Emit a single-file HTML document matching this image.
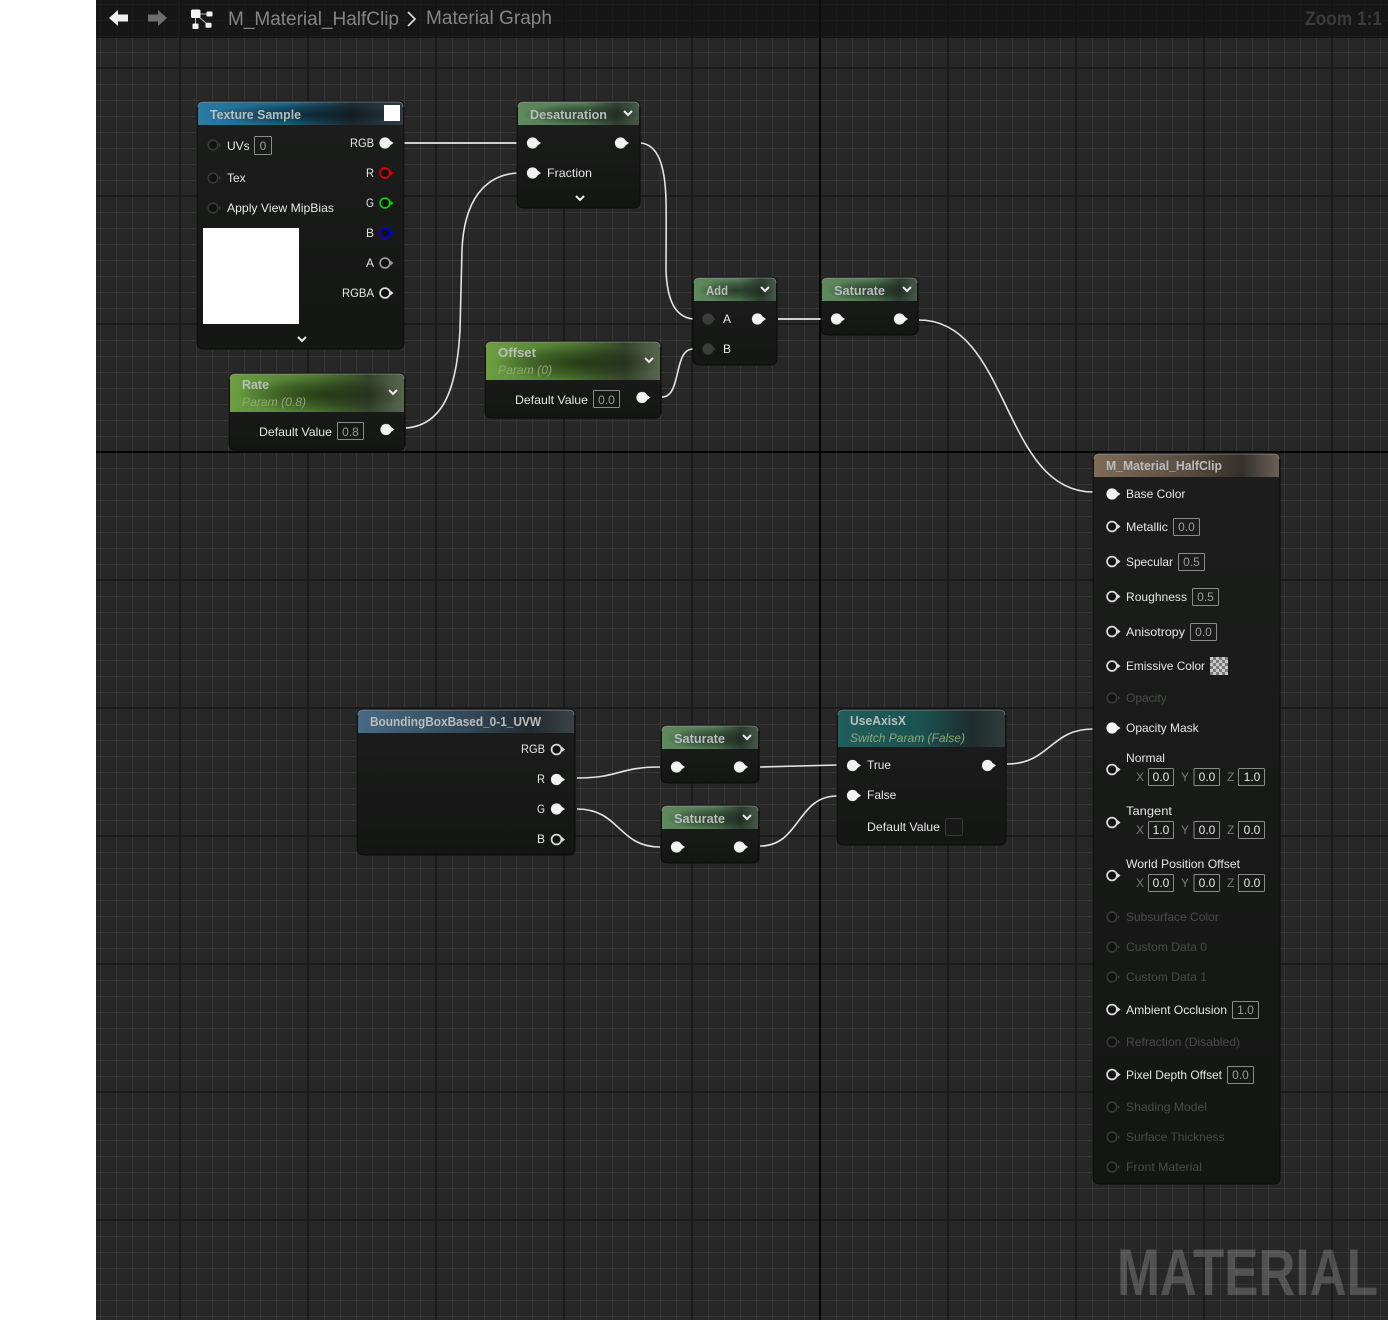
<!DOCTYPE html>
<html><head><meta charset="utf-8"><title>M_Material_HalfClip - Material Graph</title>
<style>
html,body{margin:0;padding:0;background:#fff}
body{width:1388px;height:1320px;overflow:hidden}
svg{display:block}
text{font-family:"Liberation Sans",sans-serif;font-size:12px;fill:#e6e6e6}
.t{font-weight:bold;font-size:12.5px;fill:#b9bdbd}
.s{font-style:italic;fill:#8fa678}
.d{fill:#4a4c4a}
.v{fill:#9c9c9c;text-anchor:middle}
.x{fill:#7a7a7a}
.b{fill:none;stroke:#8a8a8a;stroke-width:1}
.w{fill:none;stroke:#e4e4e4;stroke-width:1.6}
.n{fill:url(#body);stroke:#0a0a0a;stroke-width:1}
.h{font-size:19px;fill:#858585}
.r{fill:none;stroke:#a8a8a8;stroke-opacity:.55;stroke-width:1}
.k{fill:url(#dk)}
</style></head><body>
<svg width="1388" height="1320" viewBox="0 0 1388 1320" xmlns="http://www.w3.org/2000/svg">
<defs>
<pattern id="minor" x="4" y="4" width="16" height="16" patternUnits="userSpaceOnUse">
<path d="M0 0H16M0 0V16" stroke="#363636" stroke-width="2" fill="none"/>
</pattern>
<linearGradient id="body" x1="0" y1="0" x2="0" y2="1"><stop offset="0" stop-color="#1c1d1c"/><stop offset="1" stop-color="#141614"/></linearGradient>
<radialGradient id="dk" cx=".52" cy=".55" r=".48"><stop offset="0" stop-color="#000" stop-opacity=".5"/><stop offset=".6" stop-color="#000" stop-opacity=".25"/><stop offset="1" stop-color="#000" stop-opacity="0"/></radialGradient>
<linearGradient id="gBlue"><stop offset="0" stop-color="#2a7ba3"/><stop offset=".45" stop-color="#1b6284"/><stop offset=".75" stop-color="#1c2a32"/><stop offset="1" stop-color="#2b3a44"/></linearGradient>
<linearGradient id="gGreen"><stop offset="0" stop-color="#6b9f40"/><stop offset=".5" stop-color="#4e7a30"/><stop offset=".8" stop-color="#34452a"/><stop offset="1" stop-color="#586650"/></linearGradient>
<linearGradient id="gAdd"><stop offset="0" stop-color="#5e8a5c"/><stop offset=".55" stop-color="#527a54"/><stop offset=".82" stop-color="#2c3d2f"/><stop offset="1" stop-color="#46584a"/></linearGradient>
<linearGradient id="gTeal"><stop offset="0" stop-color="#1f5e5c"/><stop offset=".5" stop-color="#1a5250"/><stop offset=".8" stop-color="#1e2c2c"/><stop offset="1" stop-color="#2e3c3c"/></linearGradient>
<linearGradient id="gBB"><stop offset="0" stop-color="#466a85"/><stop offset=".5" stop-color="#33495a"/><stop offset=".8" stop-color="#222b31"/><stop offset="1" stop-color="#3a4248"/></linearGradient>
<linearGradient id="gBrown"><stop offset="0" stop-color="#7e6b58"/><stop offset=".5" stop-color="#5a4d41"/><stop offset=".8" stop-color="#352f2a"/><stop offset="1" stop-color="#6b6058"/></linearGradient>
<g id="pf"><path d="M4.500 -2.500L8 0L4.500 2.500Z" fill="currentColor"/><circle cx="-.5" r="5.600" fill="currentColor"/></g>
<g id="ph"><path d="M5.500 -2.500L8.500 0L5.500 2.500Z" fill="currentColor"/><circle r="4.900" fill="#111" stroke="currentColor" stroke-width="1.700"/></g>
<g id="pd"><path d="M6 -2L8 0L6 2Z" fill="#3a3c3a"/><circle r="4.800" fill="#111" stroke="#383a38" stroke-width="1.600"/></g>
<g id="pg"><circle r="5.600" fill="#3b3d3b"/><path d="M5.600 -2L7.400 0L5.600 2Z" fill="#3b3d3b"/></g>
<path id="chev" d="M-4 -2L0 2L4 -2" fill="none" stroke="#ececec" stroke-width="2"/>
<pattern id="chk" width="6" height="6" patternUnits="userSpaceOnUse" x="1210" y="657"><rect width="6" height="6" fill="#7a7a7a"/><rect width="3" height="3" fill="#c8c8c8"/><rect x="3" y="3" width="3" height="3" fill="#c8c8c8"/></pattern>
</defs>

<rect width="1388" height="1320" fill="#fff"/>
<rect x="96" width="1292" height="1320" fill="#272727"/>
<rect x="96" width="1292" height="1320" fill="url(#minor)"/>
<path d="M180 0V1320M308 0V1320M436 0V1320M564 0V1320M692 0V1320M948 0V1320M1076 0V1320M1204 0V1320M1332 0V1320M96 68H1388M96 196H1388M96 324H1388M96 580H1388M96 708H1388M96 836H1388M96 964H1388M96 1092H1388M96 1220H1388" stroke="#1b1b1b" stroke-width="2" fill="none"/>
<path d="M820 0V1320M96 452H1388" stroke="#050505" stroke-width="2" fill="none"/>

<!-- top bar -->
<rect x="96" width="1292" height="38" fill="#111" fill-opacity=".72"/>
<rect x="178" width="2" height="38" fill="#1a1a1a"/>
<path d="M128 14.500H118V10L109 18L118 26V21.500H128Z" fill="#f0f0f0"/>
<path d="M148 14.500H158V10L167 18L158 26V21.500H148Z" fill="#6e6e6e"/>
<path d="M196 14H208M195.500 16V25M198 16L207 24" stroke="#b8b8b8" stroke-width="1" fill="none"/>
<rect x="191" y="9.500" width="9.500" height="8.500" rx="1.500" fill="#f2f2f2"/><rect x="206.500" y="11.500" width="6" height="5" rx="1" fill="#f2f2f2"/><rect x="192.500" y="23.500" width="6" height="5.500" rx="1" fill="#f2f2f2"/><rect x="205.500" y="22.700" width="6" height="5" rx="1" fill="#f2f2f2"/>
<text x="228" y="25" class="h" textLength="171" lengthAdjust="spacingAndGlyphs">M_Material_HalfClip</text>
<path d="M408 12L415 19L408 26" fill="none" stroke="#e0e0e0" stroke-width="1.600"/>
<text x="426" y="24" class="h" textLength="126" lengthAdjust="spacingAndGlyphs">Material Graph</text>
<text x="1305" y="25" textLength="77" lengthAdjust="spacingAndGlyphs" style="font-size:19px;font-weight:bold;fill:#3b3b3b">Zoom 1:1</text>

<!-- watermark -->
<text x="1117" y="1295" textLength="261" lengthAdjust="spacingAndGlyphs" style="font-size:66px;font-weight:bold;fill:#fff;fill-opacity:.2">MATERIAL</text>

<!-- wires -->
<path class="w" style="stroke-width:2;stroke:#cfcfcf" d="M396 143H517"/>
<path class="w" d="M406 428C445 425 457 385 460 330C461 300 461 280 462 250C464 200 485 175 517 173"/>
<path class="w" d="M641 143C658 145 665 165 666 200C666.500 225 666 250 666 270C667 300 675 317 693 319"/>
<path class="w" d="M662 397C682 397 673 349 693 349"/>
<path class="w" style="stroke-width:2;stroke:#cfcfcf" d="M778 319H821"/>
<path class="w" d="M919 320C1010 320 1002 492 1093 492"/>
<path class="w" d="M1007 764C1050 764 1050 729 1093 729"/>
<path class="w" d="M760 767L837 765"/>
<path class="w" d="M577 778C620 778 618 767 660 767"/>
<path class="w" d="M577 809C620 809 618 847 660 847"/>
<path class="w" d="M760 846C800 846 797 796 837 796"/>

<!-- Texture Sample -->
<rect class="n" x="197" y="101" width="207" height="248" rx="6"/>
<path d="M198 125V107Q198 102 203 102H398Q403 102 403 107V125Z" fill="url(#gBlue)"/>
<path class="k" d="M198 125V107Q198 102 203 102H398Q403 102 403 107V125Z"/>
<path class="r" d="M198 107Q198 102 203 102H398Q403 102 403 107"/>
<text class="t" x="210" y="119" textLength="91" lengthAdjust="spacingAndGlyphs">Texture Sample</text>
<rect x="384" y="105" width="16" height="16" fill="#fff"/>
<use href="#pd" x="213" y="145"/><use href="#pd" x="213" y="178"/><use href="#pd" x="213" y="208"/>
<text x="227" y="150">UVs</text><rect class="b" x="254.500" y="136.500" width="17" height="18" rx="1"/><text class="v" x="263" y="150">0</text>
<text x="227" y="182">Tex</text>
<text x="227" y="212" textLength="107" lengthAdjust="spacingAndGlyphs">Apply View MipBias</text>
<rect x="203" y="228" width="96" height="96" fill="#fff"/>
<text x="350" y="147" textLength="24" lengthAdjust="spacingAndGlyphs">RGB</text><text x="366" y="177" textLength="8" lengthAdjust="spacingAndGlyphs">R</text><text x="366" y="207" textLength="8" lengthAdjust="spacingAndGlyphs">G</text><text x="366" y="237" textLength="8" lengthAdjust="spacingAndGlyphs">B</text><text x="366" y="267" textLength="8" lengthAdjust="spacingAndGlyphs">A</text><text x="342" y="297" textLength="32" lengthAdjust="spacingAndGlyphs">RGBA</text>
<use href="#pf" x="385.500" y="143" color="#f2f2f2"/>
<use href="#ph" x="385" y="173" color="#e00000"/>
<use href="#ph" x="385" y="203" color="#00d000"/>
<use href="#ph" x="385" y="233" color="#0000e0"/>
<use href="#ph" x="385" y="263" color="#9a9a9a"/>
<use href="#ph" x="385" y="293" color="#dcdcdc"/>
<use href="#chev" x="302" y="339"/>

<!-- Desaturation -->
<rect class="n" x="517" y="101" width="123" height="107" rx="6"/>
<path d="M518 125V107Q518 102 523 102H634Q639 102 639 107V125Z" fill="url(#gAdd)"/>
<path class="k" d="M518 125V107Q518 102 523 102H634Q639 102 639 107V125Z"/>
<path class="r" d="M518 107Q518 102 523 102H634Q639 102 639 107"/>
<text class="t" x="530" y="119" textLength="77" lengthAdjust="spacingAndGlyphs">Desaturation</text>
<use href="#chev" x="628" y="113"/>
<use href="#pf" x="533" y="143" color="#f2f2f2"/><use href="#pf" x="621" y="143" color="#f2f2f2"/><use href="#pf" x="533" y="173" color="#f2f2f2"/>
<text x="547" y="177" textLength="45" lengthAdjust="spacingAndGlyphs">Fraction</text>
<use href="#chev" x="580" y="198"/>

<!-- Add -->
<rect class="n" x="693" y="277" width="84" height="88" rx="6"/>
<path d="M694 301V283Q694 278 699 278H771Q776 278 776 283V301Z" fill="url(#gAdd)"/>
<path class="k" d="M694 301V283Q694 278 699 278H771Q776 278 776 283V301Z"/>
<path class="r" d="M694 283Q694 278 699 278H771Q776 278 776 283"/>
<text class="t" x="706" y="295" textLength="22" lengthAdjust="spacingAndGlyphs">Add</text>
<use href="#chev" x="765" y="289"/>
<use href="#pg" x="708" y="319"/><use href="#pg" x="708" y="349"/>
<text x="723" y="323">A</text><text x="723" y="353">B</text>
<use href="#pf" x="758" y="319" color="#f2f2f2"/>

<!-- Saturate -->
<rect class="n" x="821" y="277" width="97" height="58" rx="6"/>
<path d="M822 301V283Q822 278 827 278H912Q917 278 917 283V301Z" fill="url(#gAdd)"/>
<path class="k" d="M822 301V283Q822 278 827 278H912Q917 278 917 283V301Z"/>
<path class="r" d="M822 283Q822 278 827 278H912Q917 278 917 283"/>
<text class="t" x="834" y="295" textLength="51" lengthAdjust="spacingAndGlyphs">Saturate</text>
<use href="#chev" x="907" y="289"/>
<use href="#pf" x="837" y="319" color="#f2f2f2"/><use href="#pf" x="900" y="319" color="#f2f2f2"/>

<!-- Offset -->
<rect class="n" x="485" y="341" width="176" height="77" rx="6"/>
<path d="M486 380V347Q486 342 491 342H655Q660 342 660 347V380Z" fill="url(#gGreen)"/>
<path class="k" d="M486 380V347Q486 342 491 342H655Q660 342 660 347V380Z"/>
<path class="r" d="M486 347Q486 342 491 342H655Q660 342 660 347"/>
<text class="t" x="498" y="357" textLength="38" lengthAdjust="spacingAndGlyphs">Offset</text>
<text class="s" x="498" y="374" textLength="54" lengthAdjust="spacingAndGlyphs">Param (0)</text>
<use href="#chev" x="649" y="360"/>
<text x="515" y="404" textLength="73" lengthAdjust="spacingAndGlyphs">Default Value</text><rect class="b" x="593.500" y="390.500" width="26" height="17" rx="1"/><text class="v" x="606.500" y="404">0.0</text>
<use href="#pf" x="642.500" y="397.500" color="#f2f2f2"/>

<!-- Rate -->
<rect class="n" x="229" y="373" width="176" height="77" rx="6"/>
<path d="M230 412V379Q230 374 235 374H399Q404 374 404 379V412Z" fill="url(#gGreen)"/>
<path class="k" d="M230 412V379Q230 374 235 374H399Q404 374 404 379V412Z"/>
<path class="r" d="M230 379Q230 374 235 374H399Q404 374 404 379"/>
<text class="t" x="242" y="389" textLength="27" lengthAdjust="spacingAndGlyphs">Rate</text>
<text class="s" x="242" y="406" textLength="64" lengthAdjust="spacingAndGlyphs">Param (0.8)</text>
<use href="#chev" x="393" y="392"/>
<text x="259" y="436" textLength="73" lengthAdjust="spacingAndGlyphs">Default Value</text><rect class="b" x="337.500" y="422.500" width="26" height="17" rx="1"/><text class="v" x="350.500" y="436">0.8</text>
<use href="#pf" x="386.500" y="429.500" color="#f2f2f2"/>

<!-- BoundingBox -->
<rect class="n" x="357" y="709" width="218" height="146" rx="6"/>
<path d="M358 733V715Q358 710 363 710H569Q574 710 574 715V733Z" fill="url(#gBB)"/>
<path class="r" d="M358 715Q358 710 363 710H569Q574 710 574 715"/>
<text class="t" x="370" y="726" textLength="171" lengthAdjust="spacingAndGlyphs">BoundingBoxBased_0-1_UVW</text>
<text x="521" y="753" textLength="24" lengthAdjust="spacingAndGlyphs">RGB</text><text x="537" y="783" textLength="8" lengthAdjust="spacingAndGlyphs">R</text><text x="537" y="813" textLength="8" lengthAdjust="spacingAndGlyphs">G</text><text x="537" y="843" textLength="8" lengthAdjust="spacingAndGlyphs">B</text>
<use href="#ph" x="556.500" y="749.500" color="#dcdcdc"/><use href="#pf" x="557" y="779.500" color="#f2f2f2"/><use href="#pf" x="557" y="809" color="#f2f2f2"/><use href="#ph" x="556.500" y="839.500" color="#dcdcdc"/>

<!-- Saturate 2 -->
<rect class="n" x="661" y="725" width="98" height="58" rx="6"/>
<path d="M662 749V731Q662 726 667 726H753Q758 726 758 731V749Z" fill="url(#gAdd)"/>
<path class="k" d="M662 749V731Q662 726 667 726H753Q758 726 758 731V749Z"/>
<path class="r" d="M662 731Q662 726 667 726H753Q758 726 758 731"/>
<text class="t" x="674" y="743" textLength="51" lengthAdjust="spacingAndGlyphs">Saturate</text>
<use href="#chev" x="747" y="737"/>
<use href="#pf" x="677" y="767" color="#f2f2f2"/><use href="#pf" x="740" y="767" color="#f2f2f2"/>

<!-- Saturate 3 -->
<rect class="n" x="661" y="805" width="98" height="58" rx="6"/>
<path d="M662 829V811Q662 806 667 806H753Q758 806 758 811V829Z" fill="url(#gAdd)"/>
<path class="k" d="M662 829V811Q662 806 667 806H753Q758 806 758 811V829Z"/>
<path class="r" d="M662 811Q662 806 667 806H753Q758 806 758 811"/>
<text class="t" x="674" y="823" textLength="51" lengthAdjust="spacingAndGlyphs">Saturate</text>
<use href="#chev" x="747" y="817"/>
<use href="#pf" x="677" y="847" color="#f2f2f2"/><use href="#pf" x="740" y="847" color="#f2f2f2"/>

<!-- UseAxisX -->
<rect class="n" x="837" y="709" width="169" height="136" rx="6"/>
<path d="M838 747V715Q838 710 843 710H1000Q1005 710 1005 715V747Z" fill="url(#gTeal)"/>
<path class="r" d="M838 715Q838 710 843 710H1000Q1005 710 1005 715"/>
<text class="t" x="850" y="725" textLength="56" lengthAdjust="spacingAndGlyphs">UseAxisX</text>
<text class="s" x="850" y="742" textLength="115" lengthAdjust="spacingAndGlyphs">Switch Param (False)</text>
<use href="#pf" x="853" y="765.500" color="#f2f2f2"/><use href="#pf" x="853" y="795.500" color="#f2f2f2"/><use href="#pf" x="988" y="765.500" color="#f2f2f2"/>
<text x="867" y="769" textLength="24" lengthAdjust="spacingAndGlyphs">True</text><text x="867" y="799">False</text><text x="867" y="831" textLength="73" lengthAdjust="spacingAndGlyphs">Default Value</text>
<rect x="945.500" y="818.500" width="17" height="17" rx="2" fill="#171817" stroke="#383a38"/>

<!-- Result node -->
<rect class="n" x="1093" y="453" width="187" height="731" rx="6"/>
<path d="M1094 477V459Q1094 454 1099 454H1274Q1279 454 1279 459V477Z" fill="url(#gBrown)"/>
<path class="r" d="M1094 459Q1094 454 1099 454H1274Q1279 454 1279 459"/>
<text class="t" x="1106" y="470" textLength="116" lengthAdjust="spacingAndGlyphs">M_Material_HalfClip</text>
<use href="#pf" x="1112.500" y="494" color="#f2f2f2"/><text x="1126" y="498">Base Color</text>
<use href="#ph" x="1112" y="526.500" color="#dcdcdc"/><text x="1126" y="531" textLength="42" lengthAdjust="spacingAndGlyphs">Metallic</text><rect class="b" x="1173.500" y="518.500" width="26" height="17" rx="1"/><text class="v" x="1186.500" y="531">0.0</text>
<use href="#ph" x="1112" y="561.500" color="#dcdcdc"/><text x="1126" y="566" textLength="47" lengthAdjust="spacingAndGlyphs">Specular</text><rect class="b" x="1178.500" y="553.500" width="26" height="17" rx="1"/><text class="v" x="1191.500" y="566">0.5</text>
<use href="#ph" x="1112" y="596.500" color="#dcdcdc"/><text x="1126" y="601" textLength="61" lengthAdjust="spacingAndGlyphs">Roughness</text><rect class="b" x="1192.500" y="588.500" width="26" height="17" rx="1"/><text class="v" x="1205.500" y="601">0.5</text>
<use href="#ph" x="1112" y="631.500" color="#dcdcdc"/><text x="1126" y="636" textLength="59" lengthAdjust="spacingAndGlyphs">Anisotropy</text><rect class="b" x="1190.500" y="623.500" width="26" height="17" rx="1"/><text class="v" x="1203.500" y="636">0.0</text>
<use href="#ph" x="1112" y="666" color="#dcdcdc"/><text x="1126" y="670" textLength="79" lengthAdjust="spacingAndGlyphs">Emissive Color</text><rect x="1210" y="657" width="18" height="18" fill="url(#chk)"/>
<use href="#pd" x="1112" y="698"/><text class="d" x="1126" y="702">Opacity</text>
<use href="#pf" x="1112.500" y="728" color="#f2f2f2"/><text x="1126" y="732">Opacity Mask</text>

<use href="#ph" x="1112" y="769.500" color="#dcdcdc"/><text x="1126" y="762" textLength="39" lengthAdjust="spacingAndGlyphs">Normal</text>
<text class="x" x="1136" y="781">X</text><rect class="b" x="1148.500" y="768.500" width="25" height="17" rx="1"/><text x="1161" y="781" text-anchor="middle">0.0</text>
<text class="x" x="1181" y="781">Y</text><rect class="b" x="1194" y="768.500" width="25.500" height="17" rx="1"/><text x="1207" y="781" text-anchor="middle">0.0</text>
<text class="x" x="1227" y="781">Z</text><rect class="b" x="1238.500" y="768.500" width="26" height="17" rx="1"/><text x="1252" y="781" text-anchor="middle">1.0</text>

<use href="#ph" x="1112" y="822.500" color="#dcdcdc"/><text x="1126" y="815" textLength="46" lengthAdjust="spacingAndGlyphs">Tangent</text>
<text class="x" x="1136" y="834">X</text><rect class="b" x="1148.500" y="821.500" width="25" height="17" rx="1"/><text x="1161" y="834" text-anchor="middle">1.0</text>
<text class="x" x="1181" y="834">Y</text><rect class="b" x="1194" y="821.500" width="25.500" height="17" rx="1"/><text x="1207" y="834" text-anchor="middle">0.0</text>
<text class="x" x="1227" y="834">Z</text><rect class="b" x="1238.500" y="821.500" width="26" height="17" rx="1"/><text x="1252" y="834" text-anchor="middle">0.0</text>

<use href="#ph" x="1112" y="875.500" color="#dcdcdc"/><text x="1126" y="868" textLength="114" lengthAdjust="spacingAndGlyphs">World Position Offset</text>
<text class="x" x="1136" y="887">X</text><rect class="b" x="1148.500" y="874.500" width="25" height="17" rx="1"/><text x="1161" y="887" text-anchor="middle">0.0</text>
<text class="x" x="1181" y="887">Y</text><rect class="b" x="1194" y="874.500" width="25.500" height="17" rx="1"/><text x="1207" y="887" text-anchor="middle">0.0</text>
<text class="x" x="1227" y="887">Z</text><rect class="b" x="1238.500" y="874.500" width="26" height="17" rx="1"/><text x="1252" y="887" text-anchor="middle">0.0</text>

<use href="#pd" x="1112" y="917"/><text class="d" x="1126" y="921">Subsurface Color</text>
<use href="#pd" x="1112" y="947"/><text class="d" x="1126" y="951" textLength="81" lengthAdjust="spacingAndGlyphs">Custom Data 0</text>
<use href="#pd" x="1112" y="977"/><text class="d" x="1126" y="981" textLength="81" lengthAdjust="spacingAndGlyphs">Custom Data 1</text>
<use href="#ph" x="1112" y="1009.500" color="#dcdcdc"/><text x="1126" y="1014" textLength="101" lengthAdjust="spacingAndGlyphs">Ambient Occlusion</text><rect class="b" x="1232.500" y="1001.500" width="26" height="17" rx="1"/><text class="v" x="1245.500" y="1014">1.0</text>
<use href="#pd" x="1112" y="1042"/><text class="d" x="1126" y="1046" textLength="114" lengthAdjust="spacingAndGlyphs">Refraction (Disabled)</text>
<use href="#ph" x="1112" y="1074.500" color="#dcdcdc"/><text x="1126" y="1079" textLength="96" lengthAdjust="spacingAndGlyphs">Pixel Depth Offset</text><rect class="b" x="1227.500" y="1066.500" width="26" height="17" rx="1"/><text class="v" x="1240.500" y="1079">0.0</text>
<use href="#pd" x="1112" y="1107"/><text class="d" x="1126" y="1111" textLength="81" lengthAdjust="spacingAndGlyphs">Shading Model</text>
<use href="#pd" x="1112" y="1137"/><text class="d" x="1126" y="1141">Surface Thickness</text>
<use href="#pd" x="1112" y="1167"/><text class="d" x="1126" y="1171" textLength="76" lengthAdjust="spacingAndGlyphs">Front Material</text>
</svg>
</body></html>
